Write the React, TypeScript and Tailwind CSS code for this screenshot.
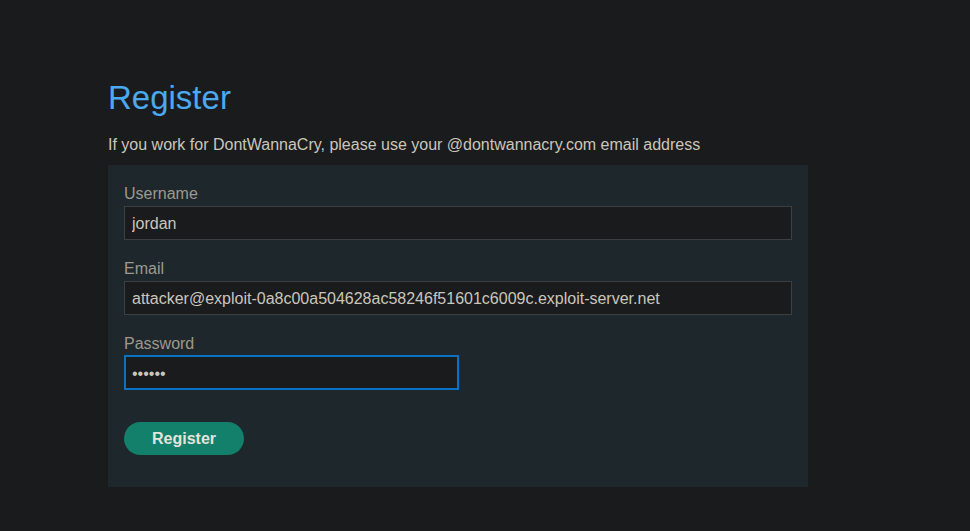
export default function App() {
  return (
    <div className="min-h-[531px] w-full bg-[#1a1b1d] font-['Liberation_Sans',Arial,sans-serif]">
      <div className="pl-[108px] pt-[78px]">
        <h1 className="text-[33px] leading-[40px] text-[#4aa9f0]">Register</h1>
        <p className="mt-[17px] text-[16px] leading-[20px] text-[#cbc6bb]">
          If you work for DontWannaCry, please use your @dontwannacry.com email address
        </p>
        <div className="mt-[10px] w-[700px] bg-[#1e272c] px-[16px] pt-[19px] pb-[32px]">
          <form className="flex flex-col" onSubmit={(e) => e.preventDefault()}>
            <label className="text-[16px] leading-[20px] text-[#9e998c]">Username</label>
            <input
              className="mt-[2px] h-[34px] w-[668px] border border-[#3c4043] bg-[#1a1b1d] px-[7px] pt-[2px] text-[16px] text-[#cbc6bb] outline-none"
              defaultValue="jordan"
            />
            <label className="mt-[19px] text-[16px] leading-[20px] text-[#9e998c]">Email</label>
            <input
              className="mt-[2px] h-[34px] w-[668px] border border-[#3c4043] bg-[#1a1b1d] px-[7px] pt-[2px] text-[16px] text-[#cbc6bb] outline-none"
              defaultValue="attacker@exploit-0a8c00a504628ac58246f51601c6009c.exploit-server.net"
            />
            <label className="mt-[19px] text-[16px] leading-[20px] text-[#9e998c]">Password</label>
            <input
              type="password"
              className="mt-[1px] h-[35px] w-[335px] border-2 border-[#0a72c4] bg-[#1a1b1d] px-[6px] pt-[2px] text-[16px] text-[#cbc6bb] outline-none"
              defaultValue="peter1"
            />
            <button
              type="submit"
              className="mt-[32px] h-[33px] w-[120px] rounded-full bg-[#12806a] text-[16px] font-bold text-[#e6e3dc]"
            >
              Register
            </button>
          </form>
        </div>
      </div>
    </div>
  );
}
